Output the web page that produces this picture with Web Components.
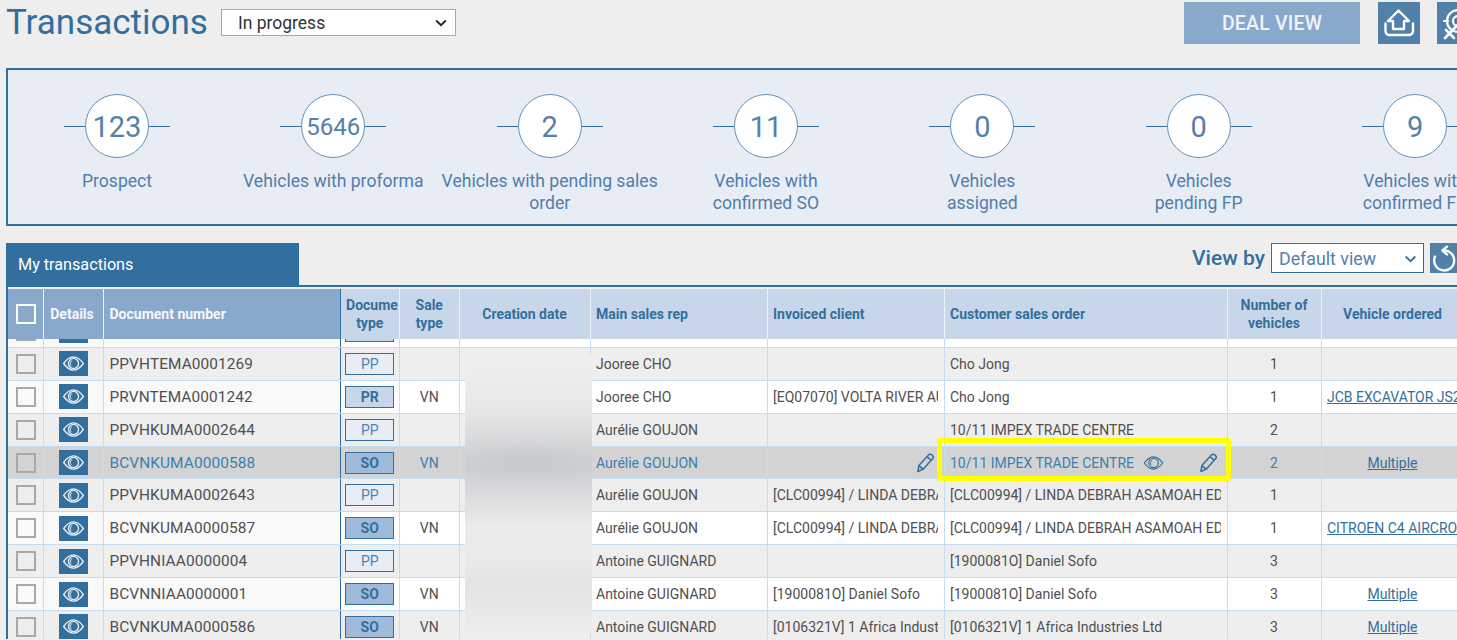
<!DOCTYPE html>
<html lang="en">
<head>
<meta charset="utf-8">
<title>Transactions</title>
<style>
    html, body { margin: 0; height: 100%; overflow: hidden; background: #eeeeee; }
    body { font-family: Roboto, "Liberation Sans", sans-serif; color: #444; }
</style>
</head>
<body>
<tx-page></tx-page>

<script>
const ICONS = {
    eye: `<svg viewBox="0 0 24 16" fill="none" stroke="currentColor" stroke-width="1.4"><path d="M1.5 8C5 3.2 8.5 1 12 1s7 2.2 10.5 7C19 12.8 15.5 15 12 15S5 12.8 1.5 8Z"/><circle cx="12" cy="8" r="5.4"/><path d="M10.6 4.8A3.6 3.6 0 0 0 9.6 10.6" stroke-width="1"/></svg>`,
    pencil: `<svg viewBox="0 0 20 22" fill="none" stroke="currentColor" stroke-width="1.6" stroke-linejoin="round"><path d="M2 20.5 3 14.2 13.2 3a2.3 2.3 0 0 1 3.3-.1l.9.9a2.3 2.3 0 0 1 0 3.2L7.6 18Z"/><path d="M11.6 4.8l4.2 3.9M3 14.2 7.6 18"/></svg>`,
    home: `<svg viewBox="0 0 42 42" fill="none" stroke="currentColor" stroke-width="2.4" stroke-linejoin="round" stroke-linecap="round"><path d="M20.5 8.5 31 19H26V27H15V19H10Z"/><path d="M7.5 21.5V29a4 4 0 0 0 4 4H31a4 4 0 0 0 4-4V21.5"/></svg>`,
    target: `<svg viewBox="0 0 42 42" fill="none" stroke="currentColor" stroke-width="2.2" stroke-linecap="round"><circle cx="21" cy="19" r="11"/><circle cx="21" cy="19" r="5"/><path d="M7 19h4M21 5v4"/><path d="M8 36 33 10" stroke-width="2.6"/><path d="M9 28l8 8" stroke-width="2.6"/></svg>`,
    reset: `<svg viewBox="0 0 30 30" fill="none" stroke="currentColor" stroke-width="2.4" stroke-linecap="round" stroke-linejoin="round"><path d="M13 7.5A10 10 0 1 1 5 13.5"/><path d="M17 3.6 12.4 7.5 17 11.4"/></svg>`
};

const CHEVRON = `<svg viewBox="0 0 12 8" fill="none" stroke="currentColor" stroke-width="1.8"><path d="M1.2 1.5 6 6.2 10.8 1.5"/></svg>`;

// Toolbar with the page title, status filter and action buttons
class TxToolbar extends HTMLElement {
    connectedCallback() {
        this.attachShadow({ mode: 'open' });
        this.shadowRoot.innerHTML = `
            <style>
                :host {
                    display: flex;
                    align-items: center;
                    height: 42px;
                    margin-right: -22px;
                }
                h1 {
                    margin: 0 13px 0 0;
                    font-size: 35px;
                    font-weight: 400;
                    line-height: 42px;
                    color: #336f9e;
                }
                .filter {
                    position: relative;
                    width: 235px;
                    height: 27px;
                    margin-top: -1px;
                }
                select {
                    appearance: none;
                    box-sizing: border-box;
                    width: 100%;
                    height: 100%;
                    padding: 0 0 0 16px;
                    border: 1px solid #a8a8a8;
                    border-radius: 0;
                    background: #fff;
                    font: 400 17.5px Roboto, sans-serif;
                    color: #333;
                }
                .filter svg {
                    position: absolute;
                    right: 9px;
                    top: 10px;
                    width: 12px;
                    height: 8px;
                    color: #222;
                }
                .deal {
                    margin-left: auto;
                    width: 176px;
                    height: 42px;
                    border: 0;
                    background: #88a9cb;
                    color: #eef3f8;
                    font: 500 19.5px Roboto, sans-serif;
                    letter-spacing: 0.2px;
                }
                .icon {
                    width: 42px;
                    height: 42px;
                    margin-left: 18px;
                    background: #5180a9;
                    color: #fff;
                    flex: none;
                }
                .icon + .icon { margin-left: 17px; }
                .icon svg { display: block; width: 42px; height: 42px; }
            </style>
            <h1>Transactions</h1>
            <div class="filter">
                <select><option>In progress</option></select>
                ${CHEVRON}
            </div>
            <button class="deal">DEAL VIEW</button>
            <div class="icon">${ICONS.home}</div>
            <div class="icon">${ICONS.target}</div>
        `;
    }
}

// One step of the funnel: number in a circle, label slotted underneath
class TxStat extends HTMLElement {
    connectedCallback() {
        const value = this.getAttribute('value');
        this.attachShadow({ mode: 'open' });
        this.shadowRoot.innerHTML = `
            <style>
                :host {
                    display: block;
                    flex: none;
                    width: 216.35px;
                    text-align: center;
                    color: #4f7fab;
                    font-size: 17.6px;
                    line-height: 22px;
                }
                .dial {
                    display: flex;
                    align-items: center;
                    justify-content: center;
                    margin-bottom: 12px;
                }
                .dial::before, .dial::after {
                    content: '';
                    width: 21px;
                    height: 1px;
                    background: #336f9e;
                }
                .circle {
                    box-sizing: border-box;
                    width: 64px;
                    height: 64px;
                    padding-top: 2px;
                    border: 1.5px solid #6393bb;
                    border-radius: 50%;
                    background: #fff;
                    display: flex;
                    align-items: center;
                    justify-content: center;
                    font-size: ${value.length > 3 ? 24 : 29}px;
                    color: #5480aa;
                }
            </style>
            <div class="dial"><div class="circle">${value}</div></div>
            <slot></slot>
        `;
    }
}

class TxStats extends HTMLElement {
    connectedCallback() {
        this.attachShadow({ mode: 'open' });
        this.shadowRoot.innerHTML = `
            <style>
                :host {
                    display: flex;
                    box-sizing: border-box;
                    height: 158px;
                    margin: 24px -20px 0 0;
                    padding: 24px 0 0 0.8px;
                    border: 2px solid #336f9e;
                    background: #e8ecf5;
                    overflow: hidden;
                }
            </style>
            <slot></slot>
        `;
    }
}

// Blue tab on the left, view selector on the right
class TxTabbar extends HTMLElement {
    connectedCallback() {
        this.attachShadow({ mode: 'open' });
        this.shadowRoot.innerHTML = `
            <style>
                :host {
                    display: flex;
                    justify-content: space-between;
                    align-items: flex-start;
                    height: 42px;
                    margin: 17px -3px 0 0;
                }
                .tab {
                    box-sizing: border-box;
                    width: 293px;
                    height: 42px;
                    padding: 0 12px;
                    background: #336f9e;
                    color: #fff;
                    font-size: 16.2px;
                    line-height: 43px;
                }
                .view { display: flex; align-items: center; height: 30px; }
                .label {
                    margin-right: 6px;
                    font-size: 21px;
                    font-weight: 500;
                    color: #336f9e;
                }
                .pick { position: relative; width: 153px; height: 30px; margin-right: 6px; }
                select {
                    appearance: none;
                    box-sizing: border-box;
                    width: 100%;
                    height: 100%;
                    padding: 0 0 0 7px;
                    border: 1px solid #336f9e;
                    border-radius: 0;
                    background: #fff;
                    font: 400 17.8px Roboto, sans-serif;
                    color: #5480aa;
                }
                .pick svg {
                    position: absolute;
                    right: 7px;
                    top: 12px;
                    width: 13px;
                    height: 8px;
                    color: #336f9e;
                }
                .reset { width: 30px; height: 30px; background: #5180a9; color: #fff; }
                .reset svg { display: block; width: 30px; height: 30px; }
            </style>
            <div class="tab">My transactions</div>
            <div class="view">
                <span class="label">View by</span>
                <div class="pick">
                    <select><option>Default view</option></select>
                    ${CHEVRON}
                </div>
                <div class="reset">${ICONS.reset}</div>
            </div>
        `;
    }
}

class TxCheck extends HTMLElement {
    connectedCallback() {
        this.attachShadow({ mode: 'open' });
        this.shadowRoot.innerHTML = `
            <style>
                :host {
                    display: block;
                    flex: none;
                    box-sizing: border-box;
                    width: 20px;
                    height: 20px;
                    border: 2px solid var(--check-color, #a9a9a9);
                }
            </style>
        `;
    }
}

class TxHead extends HTMLElement {
    connectedCallback() {
        this.attachShadow({ mode: 'open' });
        this.shadowRoot.innerHTML = `
            <style>
                :host {
                    display: grid;
                    grid-template-columns: var(--cols);
                    height: 50px;
                    font-size: 14px;
                    font-weight: 700;
                    line-height: 18px;
                    color: #336f9e;
                }
                div {
                    display: flex;
                    align-items: center;
                    justify-content: center;
                    box-sizing: border-box;
                    text-align: center;
                    background: #c8d6ea;
                    border-right: 1.5px solid #eef2f8;
                    overflow: hidden;
                    white-space: nowrap;
                }
                .fixed { background: #88a9cb; color: #f4f7fb; }
                .left { justify-content: flex-start; padding-left: 5.5px; }
                .edge { border-right: 1px solid #336f9e; }
                .details { padding-right: 3px; }
                .stack { flex-direction: column; }
                .stack .first { margin-left: 4.5px; }
            </style>
            <div class="fixed"><tx-check style="--check-color:#fff"></tx-check></div>
            <div class="fixed details">Details</div>
            <div class="fixed left edge">Document number</div>
            <div class="stack"><span class="first">Docume</span><span>type</span></div>
            <div>Sale<br>type</div>
            <div>Creation date</div>
            <div class="left">Main sales rep</div>
            <div class="left">Invoiced client</div>
            <div class="left">Customer sales order</div>
            <div>Number of<br>vehicles</div>
            <div>Vehicle ordered</div>
        `;
    }
}

class TxRow extends HTMLElement {
    connectedCallback() {
        const a = name => this.getAttribute(name) || '';
        const type = a('type');
        const active = this.hasAttribute('active');
        const vehicle = a('vehicle');
        const multiple = vehicle === 'Multiple';
        const pencil = `<span class="pencil">${ICONS.pencil}</span>`;
        this.attachShadow({ mode: 'open' });
        this.shadowRoot.innerHTML = `
            <style>
                :host {
                    display: grid;
                    grid-template-columns: var(--cols);
                    box-sizing: border-box;
                    height: 32.9px;
                    border-bottom: 1px solid #c5ddf2;
                    background: #eeeeee;
                    font-size: 14px;
                    color: #505050;
                    --fixed: #eeeeee;
                }
                :host([even]) { background: #fff; --fixed: #f9f9f9; }
                :host([active]) { background: #d3d3d3; --fixed: #d3d3d3; color: #3c7fb1; }
                .cell {
                    position: relative;
                    display: flex;
                    align-items: center;
                    box-sizing: border-box;
                    min-width: 0;
                    padding: 0 5.5px;
                    border-right: 1px solid #c5ddf2;
                    white-space: nowrap;
                }
                .clip { display: block; overflow: hidden; }
                .center { justify-content: center; }
                .fixed { background: var(--fixed); }
                .doc {
                    font-size: 15.4px;
                    letter-spacing: 0.1px;
                    border-right-color: #336f9e;
                }
                .eyebtn {
                    width: 28.5px;
                    height: 25px;
                    flex: none;
                    background: #336f9e;
                    color: #e8f0f7;
                    display: flex;
                    align-items: center;
                    justify-content: center;
                }
                .eyebtn svg { width: 23px; height: 15px; }
                .badge {
                    box-sizing: border-box;
                    flex: none;
                    width: 49px;
                    height: 22px;
                    line-height: 20px;
                    text-align: center;
                    border: 1px solid #336f9e;
                    font-size: 14px;
                    color: #4a86b5;
                    background: #e8ecf5;
                }
                .badge.PR { background: #c8d6ea; font-weight: 700; color: #336f9e; }
                .badge.SO { background: #9fbbd9; font-weight: 700; color: #336f9e; }
                .pencil { display: block; color: #336f9e; width: 19px; height: 21px; margin-left: auto; flex: none; }
                .pencil svg { display: block; width: 19px; height: 21px; }
                .client .pencil { margin-right: 3px; }
                .order .pencil { margin-right: 3px; }
                .eye { display: block; color: #336f9e; width: 21px; height: 14px; margin-left: 9px; flex: none; }
                .eye svg { display: block; width: 21px; height: 14px; }
                a { color: #336f9e; text-decoration: underline; }
                .marked::after {
                    content: '';
                    position: absolute;
                    inset: -8.5px -4px -2.5px -8px;
                    border: 5.5px solid #ffff00;
                    border-radius: 3px;
                    z-index: 2;
                }
            </style>
            <div class="cell center fixed"><tx-check></tx-check></div>
            <div class="cell center fixed"><span class="eyebtn">${ICONS.eye}</span></div>
            <div class="cell fixed doc">${a('doc')}</div>
            <div class="cell center"><span class="badge ${type}">${type}</span></div>
            <div class="cell center">${a('sale')}</div>
            <div class="cell"></div>
            <div class="cell">${a('rep')}</div>
            <div class="cell client"><span class="clip">${a('client')}</span>${active ? pencil : ''}</div>
            <div class="cell order ${active ? 'marked' : ''}"><span class="clip">${a('order')}</span>${active ? `<span class="eye">${ICONS.eye}</span>` + pencil : ''}</div>
            <div class="cell center">${a('count')}</div>
            <div class="cell ${multiple ? 'center' : ''}"><span class="clip"><a href="#">${vehicle}</a></span></div>
        `;
    }
}

// Rows shown in the scrolled part of the table
const ROWS = [
    { doc: 'PRVNTEMA0001241', type: 'PR', sale: 'VN', rep: 'Jooree CHO', order: 'Cho Jong', count: '1', even: true },
    { doc: 'PPVHTEMA0001269', type: 'PP', rep: 'Jooree CHO', order: 'Cho Jong', count: '1' },
    { doc: 'PRVNTEMA0001242', type: 'PR', sale: 'VN', rep: 'Jooree CHO', client: '[EQ07070] VOLTA RIVER AU', order: 'Cho Jong', count: '1', vehicle: 'JCB EXCAVATOR JS22', even: true },
    { doc: 'PPVHKUMA0002644', type: 'PP', rep: 'Aurélie GOUJON', order: '10/11 IMPEX TRADE CENTRE', count: '2' },
    { doc: 'BCVNKUMA0000588', type: 'SO', sale: 'VN', rep: 'Aurélie GOUJON', order: '10/11 IMPEX TRADE CENTRE', count: '2', vehicle: 'Multiple', active: true },
    { doc: 'PPVHKUMA0002643', type: 'PP', rep: 'Aurélie GOUJON', client: '[CLC00994] / LINDA DEBRAH', order: '[CLC00994] / LINDA DEBRAH ASAMOAH EDU', count: '1' },
    { doc: 'BCVNKUMA0000587', type: 'SO', sale: 'VN', rep: 'Aurélie GOUJON', client: '[CLC00994] / LINDA DEBRAH', order: '[CLC00994] / LINDA DEBRAH ASAMOAH EDU', count: '1', vehicle: 'CITROEN C4 AIRCROSS', even: true },
    { doc: 'PPVHNIAA0000004', type: 'PP', rep: 'Antoine GUIGNARD', order: '[1900081O] Daniel Sofo', count: '3' },
    { doc: 'BCVNNIAA0000001', type: 'SO', sale: 'VN', rep: 'Antoine GUIGNARD', client: '[1900081O] Daniel Sofo', order: '[1900081O] Daniel Sofo', count: '3', vehicle: 'Multiple', even: true },
    { doc: 'BCVNKUMA0000586', type: 'SO', sale: 'VN', rep: 'Antoine GUIGNARD', client: '[0106321V] 1 Africa Industr', order: '[0106321V] 1 Africa Industries Ltd', count: '3', vehicle: 'Multiple' }
];

class TxGrid extends HTMLElement {
    connectedCallback() {
        this.attachShadow({ mode: 'open' });
        const rows = ROWS.map(r => `
            <tx-row doc="${r.doc}" type="${r.type}" sale="${r.sale || ''}" rep="${r.rep}"
                client="${r.client || ''}" order="${r.order}" count="${r.count}"
                vehicle="${r.vehicle || ''}" ${r.even ? 'even' : ''} ${r.active ? 'active' : ''}></tx-row>
        `).join('');
        this.shadowRoot.innerHTML = `
            <style>
                :host {
                    --cols: 36px 60px 236.5px 59.5px 59.5px 131px 177px 177px 283px 94px 143px;
                    display: block;
                    margin-right: -20px;
                    border-top: 2px solid #336f9e;
                    border-left: 2px solid #336f9e;
                    padding-top: 2px;
                }
                .rows { margin-top: -24px; }
                .clip { height: 300px; overflow: hidden; }
                .wrap { position: relative; }
                .blur {
                    position: absolute;
                    left: 457px;
                    top: 16px;
                    width: 127px;
                    height: 278px;
                    z-index: 1;
                    background:
                        radial-gradient(ellipse 60px 20px at 50% 38%, rgba(190,194,198,.45), transparent),
                        linear-gradient(#efefef 0%, #ebebeb 12%, #e3e4e4 22%, #cdd0d3 37%, #cbced1 41%, #dfe0e1 54%, #ebebeb 62%, #e9e9e9 75%, #e3e3e3 82%, #ececec 100%);
                }
            </style>
            <tx-head></tx-head>
            <div class="wrap">
                <div class="clip"><div class="rows">${rows}</div></div>
                <div class="blur"></div>
            </div>
        `;
    }
}

class TxPage extends HTMLElement {
    connectedCallback() {
        this.attachShadow({ mode: 'open' });
        this.shadowRoot.innerHTML = `
            <style>
                :host {
                    display: block;
                    box-sizing: border-box;
                    height: 100vh;
                    padding: 2px 0 0 6px;
                    overflow: hidden;
                }
            </style>
            <tx-toolbar></tx-toolbar>
            <tx-stats>
                <tx-stat value="123">Prospect</tx-stat>
                <tx-stat value="5646">Vehicles with proforma</tx-stat>
                <tx-stat value="2">Vehicles with pending sales<br>order</tx-stat>
                <tx-stat value="11">Vehicles with<br>confirmed SO</tx-stat>
                <tx-stat value="0">Vehicles<br>assigned</tx-stat>
                <tx-stat value="0">Vehicles<br>pending FP</tx-stat>
                <tx-stat value="9">Vehicles with<br>confirmed FP</tx-stat>
            </tx-stats>
            <tx-tabbar></tx-tabbar>
            <tx-grid></tx-grid>
        `;
    }
}

customElements.define('tx-check', TxCheck);
customElements.define('tx-toolbar', TxToolbar);
customElements.define('tx-stat', TxStat);
customElements.define('tx-stats', TxStats);
customElements.define('tx-tabbar', TxTabbar);
customElements.define('tx-head', TxHead);
customElements.define('tx-row', TxRow);
customElements.define('tx-grid', TxGrid);
customElements.define('tx-page', TxPage);
</script>
</body>
</html>
